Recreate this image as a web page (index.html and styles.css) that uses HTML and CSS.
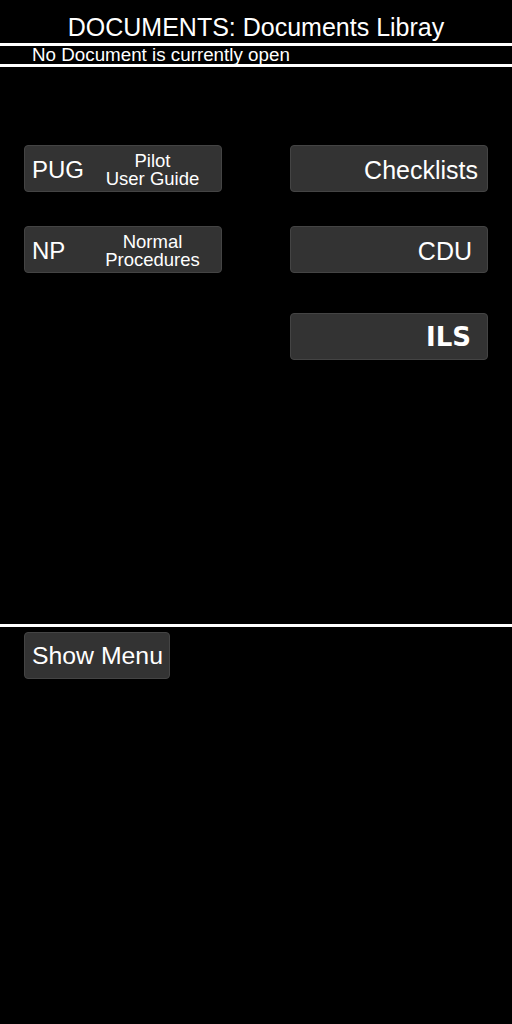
FILE: index.html
```html
<!DOCTYPE html>
<html>
<head>
<meta charset="utf-8">
<link rel="stylesheet" href="styles.css">
</head>
<body>
<div class="page">
  <header class="title">DOCUMENTS: Documents Libray</header>
  <div class="rule"></div>
  <div class="status">No Document is currently open</div>
  <div class="rule"></div>
  <main class="library">
    <div class="col">
      <div class="btn btn-doc">
        <span class="abbr">PUG</span>
        <span class="label">Pilot<br>User Guide</span>
      </div>
      <div class="btn btn-doc">
        <span class="abbr">NP</span>
        <span class="label">Normal<br>Procedures</span>
      </div>
    </div>
    <div class="col">
      <div class="btn btn-right pr-checklists">Checklists</div>
      <div class="btn btn-right pr-cdu">CDU</div>
      <div class="btn btn-right btn-bold pr-ils">ILS</div>
    </div>
  </main>
  <div class="rule"></div>
  <div class="footer">
    <div class="btn btn-menu">Show Menu</div>
  </div>
</div>
</body>
</html>
```

FILE: styles.css
```css
html, body {
  margin: 0;
  padding: 0;
  background: #000;
}
body {
  width: 512px;
  height: 1024px;
  overflow: hidden;
  font-family: "Liberation Sans", Arial, sans-serif;
  color: #fff;
}
.page {
  display: flex;
  flex-direction: column;
}
.title {
  font-size: 25px;
  line-height: 28px;
  padding-top: 13px;
  padding-bottom: 2px;
  text-align: center;
}
.rule {
  height: 3px;
  background: #fff;
}
.status {
  font-size: 18.8px;
  line-height: 18px;
  height: 18px;
  padding-left: 32px;
  white-space: nowrap;
}
.library {
  height: 557px;
  box-sizing: border-box;
  padding: 78px 0 0 24px;
  display: flex;
  gap: 68px;
}
.col {
  display: flex;
  flex-direction: column;
  gap: 34px;
  width: 198px;
}
.btn {
  box-sizing: border-box;
  height: 47px;
  background: #333333;
  border: 1px solid #444444;
  border-radius: 4px;
  display: flex;
  align-items: center;
  color: #fff;
}
.btn-doc {
  padding-left: 7px;
}
.abbr {
  width: 52px;
  font-size: 24px;
  line-height: 26px;
  padding-top: 2px;
}
.label {
  flex: 1;
  text-align: center;
  font-size: 18.5px;
  line-height: 18px;
  padding-top: 2px;
}
.btn-right {
  justify-content: flex-end;
  font-size: 25px;
  padding-top: 3px;
}
.pr-checklists { padding-right: 9px; }
.pr-cdu { padding-right: 15px; }
.pr-ils { padding-right: 16px; margin-top: 6px; padding-top: 0; }
.btn-bold {
  font-family: "DejaVu Sans", sans-serif;
  font-weight: bold;
  font-size: 26px;
}
.footer {
  padding: 5px 0 0 24px;
}
.btn-menu {
  width: 146px;
  font-size: 24.8px;
  padding-left: 7px;
  padding-top: 1px;
}
```
